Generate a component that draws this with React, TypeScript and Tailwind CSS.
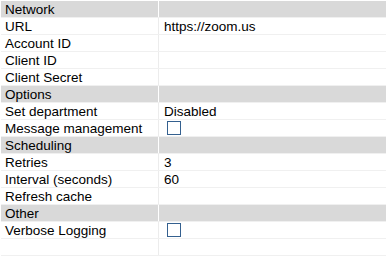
type Row =
  | { kind: "header"; label: string }
  | { kind: "text"; label: string; value?: string }
  | { kind: "check"; label: string };

const rows: Row[] = [
  { kind: "header", label: "Network" },
  { kind: "text", label: "URL", value: "https://zoom.us" },
  { kind: "text", label: "Account ID" },
  { kind: "text", label: "Client ID" },
  { kind: "text", label: "Client Secret" },
  { kind: "header", label: "Options" },
  { kind: "text", label: "Set department", value: "Disabled" },
  { kind: "check", label: "Message management" },
  { kind: "header", label: "Scheduling" },
  { kind: "text", label: "Retries", value: "3" },
  { kind: "text", label: "Interval (seconds)", value: "60" },
  { kind: "text", label: "Refresh cache" },
  { kind: "header", label: "Other" },
  { kind: "check", label: "Verbose Logging" },
  { kind: "text", label: "" },
];

function PropertyRow({ row }: { row: Row }) {
  if (row.kind === "header") {
    return (
      <div className="flex h-[17px] border-b border-[#f0f0f0]">
        <div className="w-[157px] bg-[#d9d9d9] pl-[4px] pt-[1px] leading-[15px]">{row.label}</div>
        <div className="w-[1px] bg-white" />
        <div className="flex-1 bg-[#d9d9d9]" />
      </div>
    );
  }
  return (
    <div className="flex h-[17px] border-b border-[#f0f0f0]">
      <div className="w-[157px] pl-[4px] pt-[1px] leading-[15px]">{row.label}</div>
      <div className="w-[1px] bg-[#ececec]" />
      <div className="flex flex-1 items-center pl-[5px]">
        {row.kind === "check" ? (
          <span className="ml-[3px] block h-[14px] w-[14px] border border-[#34608f] bg-white" />
        ) : (
          <span className="pt-[1px] leading-[15px]">{row.value}</span>
        )}
      </div>
    </div>
  );
}

export default function App() {
  return (
    <div className="h-[258px] w-[388px] bg-white pl-[1px] pr-[2px] pt-[1px] font-['Liberation_Sans',Arial,sans-serif] text-[13.5px] text-black">
      {rows.map((row, i) => (
        <PropertyRow key={i} row={row} />
      ))}
    </div>
  );
}
